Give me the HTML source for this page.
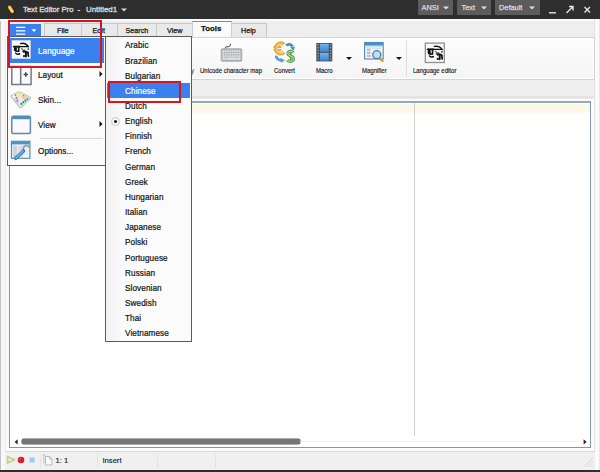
<!DOCTYPE html>
<html><head><meta charset="utf-8">
<style>
*{margin:0;padding:0;box-sizing:border-box}
html,body{width:600px;height:472px;overflow:hidden;background:#eeeeee;font-family:"Liberation Sans",sans-serif;font-size:8.4px;color:#1e1e1e;position:relative}
.a{position:absolute}
.tt,.t{-webkit-text-stroke:0.25px currentColor}
.mi{-webkit-text-stroke:0.22px currentColor}
.si{-webkit-text-stroke:0.22px currentColor}
.rl{-webkit-text-stroke:0.14px currentColor}
.t{position:absolute;white-space:nowrap;line-height:1}
svg{position:absolute;overflow:visible}
.tab{position:absolute;top:23px;height:14px;background:#e9e9e9;border:1px solid #c9c9c9;border-bottom:none}
.tt{position:absolute;white-space:nowrap;line-height:1;font-size:7.2px;top:27px;color:#151515}
.rl{position:absolute;white-space:nowrap;line-height:1;font-size:6.6px;top:67.5px;color:#151515;transform:scaleX(0.91);transform-origin:0 0}
.mi{position:absolute;white-space:nowrap;line-height:1;left:38px;font-size:8.6px;color:#151515;letter-spacing:0.05px;transform:scaleX(0.95);transform-origin:0 0}
.si{position:absolute;white-space:nowrap;line-height:1;left:125px;font-size:8.6px;color:#151515;letter-spacing:0.1px;transform:scaleX(0.95);transform-origin:0 0}
</style></head><body>
<!-- title bar -->
<div class="a" style="left:0;top:0;width:600px;height:19px;background:#2e2e2e"></div>
<svg style="left:0;top:0" width="24" height="19"><g transform="translate(10.9,9.3) rotate(-32)"><rect x="-2.4" y="-5" width="4.8" height="10" rx="2.2" fill="#24160c"/><rect x="-1.8" y="-4.3" width="3.6" height="8.6" rx="1.7" fill="#d9aa44"/><rect x="-1" y="-3.2" width="2" height="6.4" rx="1" fill="#f4d884"/></g></svg>
<div class="t" style="left:23px;top:6px;color:#d8d8d8;font-size:7.7px;-webkit-text-stroke:0.35px #d8d8d8">Text Editor Pro</div>
<div class="t" style="left:77.5px;top:6px;color:#d8d8d8;font-size:7.7px;-webkit-text-stroke:0.35px #d8d8d8">-</div>
<div class="t" style="left:86px;top:6px;color:#d8d8d8;font-size:7.9px;-webkit-text-stroke:0.35px #d8d8d8">Untitled1</div>
<svg style="left:121px;top:8px" width="6" height="4"><path d="M0 0.5H6L3 3.5Z" fill="#d8d8d8"/></svg>
<!-- title buttons -->
<div class="a" style="left:418px;top:0;width:35px;height:15px;background:#5c5c5c"></div>
<div class="a" style="left:457px;top:0;width:34px;height:15px;background:#5c5c5c"></div>
<div class="a" style="left:495px;top:0;width:45px;height:15px;background:#5c5c5c"></div>
<div class="t" style="left:421.5px;top:4px;color:#dcdcdc;font-size:7.4px">ANSI</div>
<div class="t" style="left:461.5px;top:4px;color:#dcdcdc;font-size:7.4px">Text</div>
<div class="t" style="left:499px;top:4px;color:#dcdcdc;font-size:7.4px">Default</div>
<svg style="left:443px;top:6px" width="6" height="4"><path d="M0 0.5H6L3 3.5Z" fill="#e0e0e0"/></svg>
<svg style="left:481px;top:6px" width="6" height="4"><path d="M0 0.5H6L3 3.5Z" fill="#e0e0e0"/></svg>
<svg style="left:529px;top:6px" width="6" height="4"><path d="M0 0.5H6L3 3.5Z" fill="#e0e0e0"/></svg>
<svg style="left:545px;top:3px" width="50" height="14">
<path d="M4 9.8H11" stroke="#e4e4e4" stroke-width="1.4"/>
<path d="M21.5 10L28 3.5M24 3.5H28V7.5" stroke="#e4e4e4" stroke-width="1.4" fill="none"/>
<path d="M39.5 4L45 9.5M45 4L39.5 9.5" stroke="#e4e4e4" stroke-width="1.4"/>
</svg>

<!-- window frame -->
<div class="a" style="left:0;top:19px;width:1px;height:451px;background:#c4c4c4"></div>
<div class="a" style="left:1px;top:19px;width:6px;height:451px;background:#f8f8f8"></div>
<div class="a" style="left:5px;top:19px;width:1px;height:451px;background:#ebebeb"></div>
<div class="a" style="left:0;top:19px;width:600px;height:2px;background:#fafafa"></div>
<div class="a" style="left:594px;top:19px;width:1px;height:451px;background:#e2e2e2"></div>
<div class="a" style="left:595px;top:19px;width:4px;height:451px;background:#fafafa"></div>
<div class="a" style="left:599px;top:19px;width:1px;height:451px;background:#e6e6e6"></div>
<div class="a" style="left:0;top:470px;width:600px;height:2px;background:#2e2e2e"></div>

<!-- tabs -->
<div class="tab" style="left:44px;width:38px"></div>
<div class="tab" style="left:81px;width:37px"></div>
<div class="tab" style="left:117px;width:40px"></div>
<div class="tab" style="left:156px;width:37px"></div>
<div class="tab" style="left:231px;width:36px"></div>
<div class="a" style="left:192px;top:21px;width:40px;height:17px;background:#fafafa;border:1px solid #cdcdcd;border-top:1px solid #5f8fcc;border-bottom:none"></div>
<div class="tt" style="left:57px">File</div>
<div class="tt" style="left:92.5px">Edit</div>
<div class="tt" style="left:125.5px">Search</div>
<div class="tt" style="left:167px">View</div>
<div class="tt" style="left:201px;top:25px;font-weight:bold;color:#111;font-size:7.8px">Tools</div>
<div class="tt" style="left:241px">Help</div>

<!-- ribbon -->
<div class="a" style="left:7px;top:37px;width:587.5px;height:43px;background:linear-gradient(#fdfdfd,#f5f5f5);border:1px solid #d3d3d3;box-shadow:inset 0 0 0 1px #ffffff"></div>
<div class="a" style="left:406px;top:40px;width:1px;height:36px;background:#dedede"></div>
<!-- keyboard icon -->
<svg style="left:218px;top:40px" width="28" height="24">
<path d="M7.3 9Q7.1 6.6 9.6 6.6Q12.6 6.6 12.5 3.8" stroke="#5e6469" stroke-width="1.1" fill="none"/>
<rect x="3.2" y="8.8" width="20.6" height="12.4" rx="0.8" fill="#aeb4b8" stroke="#9ca2a6" stroke-width="0.8"/>
<g fill="#e4e8ea">
<rect x="4.6" y="10.2" width="17.8" height="1.8"/>
<rect x="4.6" y="12.7" width="17.8" height="1.8"/>
<rect x="4.6" y="15.2" width="17.8" height="1.8"/>
<rect x="4.6" y="17.7" width="17.8" height="2"/>
</g>
<g stroke="#9aa0a5" stroke-width="0.5">
<path d="M6.4 10.2V17M8.2 10.2V17M10 10.2V17M11.8 10.2V17M13.6 10.2V17M15.4 10.2V17M17.2 10.2V17M19 10.2V17M20.8 10.2V17M8 17.7V19.7M19 17.7V19.7"/>
</g>
</svg>
<!-- convert icon -->
<svg style="left:271px;top:40px" width="28" height="24">
<path d="M13 4.6C10.2 1.8 5 3.4 5 8.4 5 13.4 10.2 15 13 12.2" stroke="#e3a63a" stroke-width="3.6" fill="none"/>
<path d="M2.6 7H10.4M2.6 9.9H10.4" stroke="#e3a63a" stroke-width="1.8"/>
<path d="M12.6 4.8C10 2.6 5.8 3.8 5.8 8.4 5.8 13 10 14.2 12.6 12" stroke="#f8dc8c" stroke-width="1.1" fill="none"/>
<path d="M15.2 5.6C16.8 3.8 20 4 21.6 6.6" stroke="#4a8ccc" stroke-width="2.8" fill="none"/>
<path d="M19 7.4L24 6.6 22.6 10.6Z" fill="#4a8ccc"/>
<path d="M5.2 15.6C5 18.4 7.6 20.4 10.6 20.4" stroke="#5b9ad8" stroke-width="2.8" fill="none"/>
<path d="M9.6 17.8L14 20.4 9.8 22.8Z" fill="#5b9ad8"/>
<path d="M22.4 12.6C21.2 10.8 16.8 10.8 16.8 13.6 16.8 16.4 22.6 15.6 22.6 18.8 22.6 21.8 17.4 21.8 16.2 20.2" stroke="#5ea64a" stroke-width="3" fill="none"/>
<path d="M19.7 9.6V22.8" stroke="#5ea64a" stroke-width="1.8"/>
<path d="M22.4 12.6C21.2 10.8 16.8 10.8 16.8 13.6 16.8 16.4 22.6 15.6 22.6 18.8 22.6 21.8 17.4 21.8 16.2 20.2" stroke="#c4e6ac" stroke-width="1" fill="none"/>
</svg>
<!-- macro film -->
<svg style="left:312px;top:40px" width="24" height="24">
<defs><linearGradient id="fg" x1="0" y1="0" x2="0" y2="1"><stop offset="0" stop-color="#70b4f2"/><stop offset="1" stop-color="#3f82d2"/></linearGradient></defs>
<rect x="4.3" y="3" width="16" height="18.4" fill="#4a4e52"/>
<rect x="7.9" y="3.8" width="8.9" height="8" fill="url(#fg)"/>
<rect x="7.9" y="12.8" width="8.9" height="7.8" fill="url(#fg)"/>
<g fill="#9ea6ae">
<rect x="5.4" y="4.2" width="1.4" height="1.3"/><rect x="5.4" y="7" width="1.4" height="1.3"/><rect x="5.4" y="9.8" width="1.4" height="1.3"/><rect x="5.4" y="12.6" width="1.4" height="1.3"/><rect x="5.4" y="15.4" width="1.4" height="1.3"/><rect x="5.4" y="18.2" width="1.4" height="1.3"/>
<rect x="17.9" y="4.2" width="1.4" height="1.3"/><rect x="17.9" y="7" width="1.4" height="1.3"/><rect x="17.9" y="9.8" width="1.4" height="1.3"/><rect x="17.9" y="12.6" width="1.4" height="1.3"/><rect x="17.9" y="15.4" width="1.4" height="1.3"/><rect x="17.9" y="18.2" width="1.4" height="1.3"/>
</g>
</svg>
<svg style="left:345.5px;top:57px" width="7" height="4"><path d="M0 0H6L3 3Z" fill="#111"/></svg>
<!-- magnifier -->
<svg style="left:361px;top:40px" width="26" height="24">
<rect x="3.6" y="2.5" width="18.6" height="16.5" fill="#eef4f9" stroke="#5a88b0" stroke-width="1.1"/>
<rect x="4" y="2.8" width="17.8" height="2.8" fill="#4a8ec8"/>
<rect x="4.3" y="6.2" width="17.2" height="1.2" fill="#bfe0f6"/>
<g fill="#c4b8c0"><rect x="6" y="8.5" width="3.5" height="2.2"/><rect x="6" y="11.8" width="3.5" height="2.2"/><rect x="6" y="15" width="3.5" height="2"/></g>
<path d="M11 8.5H20" stroke="#cfd6dc" stroke-width="0.8"/>
<path d="M18.6 18.2L21.6 21" stroke="#d4a040" stroke-width="2.4" stroke-linecap="round"/>
<circle cx="15.8" cy="14.7" r="4" fill="#b9e0f6" stroke="#4f7896" stroke-width="1.3"/>
</svg>
<svg style="left:396px;top:57px" width="7" height="4"><path d="M0 0H6L3 3Z" fill="#111"/></svg>
<!-- language editor icon -->
<svg style="left:424px;top:42px" width="22" height="21">
<rect x="1.3" y="1.1" width="19" height="19.4" fill="#f6f6f6" stroke="#909090" stroke-width="1.3"/>
<g transform="translate(2,1.3)"><g fill="none" stroke="#111" stroke-linecap="round">
<path d="M1.6 6.1H16.2" stroke-width="1.3"/>
<path d="M1.6 6.1H7.4" stroke-width="1.8"/>
<path d="M8.4 3.1Q10.6 2.5 12.8 3.3Q14.8 4.1 16 6.2" stroke-width="1.5"/>
<ellipse cx="3.2" cy="8.6" rx="1.6" ry="2.2" fill="#111" stroke="none"/>
<path d="M3 10.2Q4.4 11.3 6.4 10.4" stroke-width="1.6"/>
<path d="M6.5 6.1V10.8" stroke-width="1.5"/>
<path d="M3.4 12.6Q4.6 14.4 7.4 13.3" stroke-width="1.3"/>
<circle cx="7.1" cy="13.3" r="0.9" fill="#111" stroke="none"/>
<path d="M9.2 7.8L11.6 10.2" stroke="#666" stroke-width="1.1"/>
<path d="M10.2 10.8L12.8 9.4" stroke="#444" stroke-width="1.1"/>
<path d="M11.6 11.4Q13.6 10.6 15.8 12" stroke-width="1.8"/>
<path d="M13.7 11.2V16" stroke-width="1.9"/>
<path d="M15.8 12.6L16.2 15.6" stroke-width="1.7"/>
<circle cx="16" cy="8.6" r="0.8" fill="#222" stroke="none"/>
<circle cx="11.8" cy="15.6" r="1.1" fill="#111" stroke="none"/>
</g></g>
</svg>
<div class="rl" style="left:190.5px;top:67.5px;color:#555">y</div>
<div class="rl" style="left:200px">Unicode character map</div>
<div class="rl" style="left:273.5px">Convert</div>
<div class="rl" style="left:316px">Macro</div>
<div class="rl" style="left:361.5px">Magnifier</div>
<div class="rl" style="left:413px">Language editor</div>

<!-- editor -->
<div class="a" style="left:7px;top:96px;width:587px;height:3px;background:linear-gradient(#ebe8eb,#e2dee2 50%,#f2f0f2)"></div>
<div class="a" style="left:7px;top:99px;width:587px;height:352px;background:#fcfcfc"></div>
<div class="a" style="left:9px;top:101px;width:582px;height:347px;background:#fff;border:1px solid #8295ae;border-top:2px solid #98a7ba"></div>
<div class="a" style="left:10px;top:104px;width:580px;height:9.5px;background:linear-gradient(#f8fbe8,#fdf6e4 50%,#fdf5e6 70%,#fffefc)"></div>
<div class="a" style="left:414px;top:103px;width:1px;height:332.5px;background:#d0d0d0"></div>
<div class="a" style="left:22px;top:438.5px;width:277.5px;height:5.5px;background:#7a7575;border-radius:1.5px;box-shadow:0 0 0 0.5px #5e5a5a"></div>
<div class="a" style="left:300px;top:441px;width:278px;height:1px;background:#f0eeee"></div>
<svg style="left:13.5px;top:438.5px" width="5" height="6"><path d="M3.6 0.2V5.6L0.6 2.9Z" fill="#222"/></svg>
<svg style="left:583px;top:438.5px" width="5" height="6"><path d="M0.6 0.2V5.6L3.6 2.9Z" fill="#222"/></svg>

<!-- status bar -->
<div class="a" style="left:5px;top:451px;width:590px;height:1px;background:#d9d9d9"></div>
<div class="a" style="left:5px;top:452px;width:590px;height:18px;background:#f0f0f0"></div>
<svg style="left:5px;top:454px" width="12" height="11"><path d="M2.5 2.6L9.6 5.8 2.5 9Z" fill="#e6efc8" stroke="#bcd38e" stroke-width="1.6" stroke-linejoin="round"/></svg>
<svg style="left:17px;top:456px" width="8" height="8"><circle cx="4" cy="4" r="3.3" fill="#d81f26"/><circle cx="3.2" cy="3" r="1" fill="#f06a6a" opacity="0.6"/></svg>
<div class="a" style="left:28.5px;top:456.5px;width:6px;height:6px;background:#9ccbec;border:1px solid #c6e2f4"></div>
<div class="a" style="left:40px;top:454px;width:1px;height:14px;background:#e6e6e6"></div>
<svg style="left:42px;top:454px" width="12" height="12"><path d="M3.5 2.5H7.5L10 5V11H3.5Z" fill="#fbfbfb" stroke="#a4acb4" stroke-width="0.8"/><path d="M7.5 2.5V5H10" stroke="#a4acb4" stroke-width="0.7" fill="none"/><path d="M1.8 0.5V9.5M0.8 1.2H3.6" stroke="#b4bcc4" stroke-width="0.8"/></svg>
<div class="t" style="left:55.5px;top:456.5px;font-size:7.6px;color:#222;-webkit-text-stroke:0.15px #222">1: 1</div>
<div class="a" style="left:97px;top:454px;width:1px;height:14px;background:#e2e2e2"></div>
<div class="t" style="left:102.5px;top:456.5px;font-size:7.6px;color:#222;-webkit-text-stroke:0.15px #222">Insert</div>
<div class="a" style="left:157px;top:454px;width:1px;height:14px;background:#e2e2e2"></div>
<div class="a" style="left:215px;top:454px;width:1px;height:14px;background:#e2e2e2"></div>
<svg style="left:582px;top:456px" width="12" height="12"><path d="M11 2L2 11M11 6L6 11M11 9.5L9.5 11" stroke="#d2d2d2" stroke-width="0.9"/></svg>

<!-- left menu -->
<div class="a" style="left:7px;top:36px;width:99px;height:129.5px;background:#fbfbfb;border:1px solid #5a5a5a"></div>
<div class="a" style="left:10px;top:37.5px;width:94px;height:25.5px;background:#3a80ee"></div>
<!-- language icon -->
<svg style="left:12px;top:40px" width="19" height="19">
<rect x="-0.2" y="0.3" width="18.8" height="18.4" fill="#f7f7f7"/>
<g transform="translate(0.2,0.5)"><g fill="none" stroke="#111" stroke-linecap="round">
<path d="M1.6 6.1H16.2" stroke-width="1.3"/>
<path d="M1.6 6.1H7.4" stroke-width="1.8"/>
<path d="M8.4 3.1Q10.6 2.5 12.8 3.3Q14.8 4.1 16 6.2" stroke-width="1.5"/>
<ellipse cx="3.2" cy="8.6" rx="1.6" ry="2.2" fill="#111" stroke="none"/>
<path d="M3 10.2Q4.4 11.3 6.4 10.4" stroke-width="1.6"/>
<path d="M6.5 6.1V10.8" stroke-width="1.5"/>
<path d="M3.4 12.6Q4.6 14.4 7.4 13.3" stroke-width="1.3"/>
<circle cx="7.1" cy="13.3" r="0.9" fill="#111" stroke="none"/>
<path d="M9.2 7.8L11.6 10.2" stroke="#666" stroke-width="1.1"/>
<path d="M10.2 10.8L12.8 9.4" stroke="#444" stroke-width="1.1"/>
<path d="M11.6 11.4Q13.6 10.6 15.8 12" stroke-width="1.8"/>
<path d="M13.7 11.2V16" stroke-width="1.9"/>
<path d="M15.8 12.6L16.2 15.6" stroke-width="1.7"/>
<circle cx="16" cy="8.6" r="0.8" fill="#222" stroke="none"/>
<circle cx="11.8" cy="15.6" r="1.1" fill="#111" stroke="none"/>
</g></g>
</svg>
<div class="mi" style="top:47px;color:#fff">Language</div>
<!-- layout icon -->
<svg style="left:9px;top:64px" width="24" height="24">
<rect x="2.8" y="2.5" width="19.3" height="18" fill="#fbfbfd" stroke="#6f7d8b" stroke-width="1.5"/>
<path d="M11.7 2.5V20.5" stroke="#6f7d8b" stroke-width="1.6"/>
<path d="M14.6 10.5H19M16.8 8.2V12.8" stroke="#3f4a55" stroke-width="1.5"/>
</svg>
<div class="mi" style="top:71.4px">Layout</div>
<svg style="left:98.5px;top:71px" width="4" height="6"><path d="M0.5 0L3.5 3 0.5 6Z" fill="#111"/></svg>
<!-- skin icon -->
<svg style="left:9px;top:88px" width="24" height="24">
<path d="M2.2 8.8Q1.6 8.2 2.6 7.5L9.5 4Q10.2 3.7 11 4.1L21.2 9.2Q22 9.8 21.3 10.6L12.4 19.2Q11.5 19.9 10.6 19.2Z" fill="#efefef" stroke="#c4c4c4" stroke-width="1.2"/>
<path d="M7.3 5.6L11 4.2 14.8 6.2 12.3 10 8.6 8.6Z" fill="#eeeb9c"/>
<path d="M14.8 6.2L19.3 8.5 15.3 12.2 12.3 10Z" fill="#f3cbb5"/>
<path d="M5.2 9.8L8.6 8.6 10.4 14.5 8 15.8Z" fill="#d4c2ea"/>
<path d="M10.4 15.5L19.5 9.2 21 10.4 12 18.6Z" fill="#a6e0cc"/>
<g fill="#3b7464"><circle cx="12.3" cy="15.8" r="0.85"/><circle cx="14.3" cy="14.2" r="0.85"/><circle cx="16.3" cy="12.6" r="0.85"/><circle cx="18.3" cy="11" r="0.85"/></g>
<g fill="#6a6a6a"><circle cx="6.6" cy="7.2" r="0.7"/><circle cx="7.4" cy="9.8" r="0.7"/><circle cx="8.4" cy="12.6" r="0.7"/><circle cx="14.4" cy="7.6" r="0.6"/></g>
</svg>
<div class="mi" style="top:95.9px">Skin...</div>
<!-- view icon -->
<svg style="left:9px;top:113px" width="24" height="24">
<rect x="2.8" y="3.2" width="18.6" height="17.4" rx="1.5" fill="#fbf9fb" stroke="#5f88a6" stroke-width="1.5"/>
<rect x="3.4" y="3.6" width="17.4" height="2.6" fill="#4a8fc6"/>
</svg>
<div class="mi" style="top:120.9px">View</div>
<svg style="left:98.5px;top:121px" width="4" height="6"><path d="M0.5 0L3.5 3 0.5 6Z" fill="#111"/></svg>
<div class="a" style="left:40px;top:138px;width:63px;height:1px;background:#d6d6d6"></div>
<!-- options icon -->
<svg style="left:9px;top:138px" width="24" height="24">
<rect x="2.5" y="3.3" width="18.4" height="17" fill="#f2f5f8" stroke="#5f8aad" stroke-width="1.2"/>
<rect x="3" y="3.6" width="17.6" height="2.8" fill="#4e92cc"/>
<g fill="#c6d2dc"><rect x="4" y="7.5" width="4" height="11.5"/></g>
<g fill="#ead8dc"><rect x="9" y="7.5" width="5" height="11.5"/></g>
<g stroke="#d8dde2" stroke-width="0.7"><path d="M4 10H20M4 13H20M4 16H20"/></g>
<path d="M15.5 13.5A3.3 3.3 0 1 1 20.5 9.5" stroke="#9a9ea4" stroke-width="1.8" fill="none"/>
<path d="M6.8 20.3L14.5 13" stroke="#2f7fc4" stroke-width="3.6" stroke-linecap="round"/>
<path d="M7 19.8L14 13.2" stroke="#6ab8ea" stroke-width="1.6" stroke-linecap="round"/>
</svg>
<div class="mi" style="top:147.3px">Options...</div>

<!-- submenu -->
<div class="a" style="left:105px;top:36px;width:87px;height:305.5px;background:#fbfbfb;border:1px solid #5a5a5a"></div>
<div class="a" style="left:106px;top:37px;width:16px;height:303.5px;background:linear-gradient(90deg,#f2f2f2,#f6f6f6 70%,#fbfbfb)"></div>
<div class="a" style="left:107px;top:83.3px;width:83px;height:15px;background:#3a80ee"></div>
<svg style="left:110.5px;top:117px" width="9" height="9"><circle cx="4.5" cy="4.5" r="3.9" fill="#fff" stroke="#bdbdbd" stroke-width="0.9"/><circle cx="4.5" cy="4.5" r="1.6" fill="#111"/></svg>
<div class="si" style="top:41.3px">Arabic</div>
<div class="si" style="top:56.5px">Brazilian</div>
<div class="si" style="top:71.6px">Bulgarian</div>
<div class="si" style="top:86.8px;color:#fff">Chinese</div>
<div class="si" style="top:101.9px">Dutch</div>
<div class="si" style="top:117.1px">English</div>
<div class="si" style="top:132.3px">Finnish</div>
<div class="si" style="top:147.4px">French</div>
<div class="si" style="top:162.6px">German</div>
<div class="si" style="top:177.7px">Greek</div>
<div class="si" style="top:192.9px">Hungarian</div>
<div class="si" style="top:208.1px">Italian</div>
<div class="si" style="top:223.2px">Japanese</div>
<div class="si" style="top:238.4px">Polski</div>
<div class="si" style="top:253.5px">Portuguese</div>
<div class="si" style="top:268.7px">Russian</div>
<div class="si" style="top:283.9px">Slovenian</div>
<div class="si" style="top:299.0px">Swedish</div>
<div class="si" style="top:314.2px">Thai</div>
<div class="si" style="top:329.3px">Vietnamese</div>


<!-- blue button -->
<div class="a" style="left:10px;top:24px;width:31px;height:12px;background:#3a80ee"></div>
<svg style="left:10px;top:24px" width="31" height="12">
<path d="M6 3.4H15.3M6 6.8H15.3M6 10.1H15.3" stroke="#fff" stroke-width="1.3"/>
<path d="M21.5 5.3H26.5L24 8Z" fill="#fff"/>
</svg>

<!-- red boxes -->
<div class="a" style="left:8px;top:19.5px;width:93.5px;height:48px;border:2px solid #d6161e"></div>
<div class="a" style="left:108px;top:80.8px;width:72.5px;height:22.2px;border:2px solid #d6161e"></div>
</body></html>
